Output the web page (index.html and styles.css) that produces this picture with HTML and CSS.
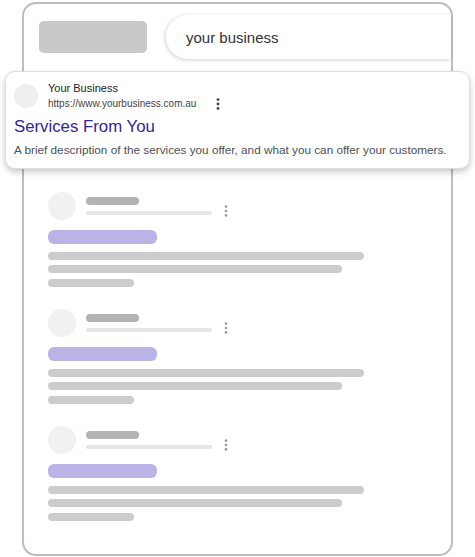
FILE: index.html
```html
<!DOCTYPE html>
<html lang="en">
<head>
<meta charset="utf-8">
<title>Search result preview</title>
<link rel="stylesheet" href="styles.css">
</head>
<body>
<div class="frame">
  <div class="header">
    <div class="logo-block"></div>
    <div class="search">your business</div>
  </div>

  <div class="card">
    <div class="card-head">
      <div class="favicon"></div>
      <div class="meta">
        <div class="name">Your Business</div>
        <div class="url-row">
          <span class="url">https://www.yourbusiness.com.au</span>
          <svg class="kebab" width="4" height="12" viewBox="0 0 4 12"><circle cx="2" cy="1.6" r="1.4"/><circle cx="2" cy="6" r="1.4"/><circle cx="2" cy="10.4" r="1.4"/></svg>
        </div>
      </div>
    </div>
    <div class="title">Services From You</div>
    <div class="desc">A brief description of the services you offer, and what you can offer your customers.</div>
  </div>

  <div class="results">
    <div class="sk">
      <div class="sk-head">
        <div class="sk-circle"></div>
        <div class="sk-meta">
          <div class="sk-name"></div>
          <div class="sk-url"></div>
        </div>
        <svg class="sk-kebab" width="4" height="12" viewBox="0 0 4 12"><circle cx="2" cy="1.6" r="1.3"/><circle cx="2" cy="6" r="1.3"/><circle cx="2" cy="10.4" r="1.3"/></svg>
      </div>
      <div class="sk-title"></div>
      <div class="sk-line l1"></div>
      <div class="sk-line l2"></div>
      <div class="sk-line l3"></div>
    </div>
    <div class="sk">
      <div class="sk-head">
        <div class="sk-circle"></div>
        <div class="sk-meta">
          <div class="sk-name"></div>
          <div class="sk-url"></div>
        </div>
        <svg class="sk-kebab" width="4" height="12" viewBox="0 0 4 12"><circle cx="2" cy="1.6" r="1.3"/><circle cx="2" cy="6" r="1.3"/><circle cx="2" cy="10.4" r="1.3"/></svg>
      </div>
      <div class="sk-title"></div>
      <div class="sk-line l1"></div>
      <div class="sk-line l2"></div>
      <div class="sk-line l3"></div>
    </div>
    <div class="sk">
      <div class="sk-head">
        <div class="sk-circle"></div>
        <div class="sk-meta">
          <div class="sk-name"></div>
          <div class="sk-url"></div>
        </div>
        <svg class="sk-kebab" width="4" height="12" viewBox="0 0 4 12"><circle cx="2" cy="1.6" r="1.3"/><circle cx="2" cy="6" r="1.3"/><circle cx="2" cy="10.4" r="1.3"/></svg>
      </div>
      <div class="sk-title"></div>
      <div class="sk-line l1"></div>
      <div class="sk-line l2"></div>
      <div class="sk-line l3"></div>
    </div>
  </div>
</div>
</body>
</html>
```

FILE: styles.css
```css
html, body {
  margin: 0;
  padding: 0;
  background: #ffffff;
}

body {
  font-family: "Liberation Sans", Arial, sans-serif;
  color: #222;
}

.frame {
  box-sizing: border-box;
  margin: 2px 0 0 22px;
  width: 431px;
  height: 554px;
  border: 2px solid #bdbdbd;
  border-radius: 14px;
  background: #fff;
}

.header {
  display: flex;
  align-items: center;
  padding: 11px 0 0 15px;
}

.logo-block {
  width: 108px;
  height: 32px;
  border-radius: 5px;
  background: #c9c9c9;
  flex: none;
}

.search {
  flex: 1;
  margin-left: 19px;
  height: 44px;
  box-sizing: border-box;
  padding-left: 20px;
  display: flex;
  align-items: center;
  border-radius: 22px 0 0 22px;
  background: #fff;
  box-shadow: -1px 1px 4px rgba(0, 0, 0, 0.18);
  font-size: 15px;
  color: #333;
}

.card {
  margin: 12px -19px 0 -19px;
  border: 1px solid #dedede;
  border-radius: 10px;
  background: #fff;
  box-shadow: 0 3px 6px rgba(0, 0, 0, 0.22);
  padding: 9px 8px 9px 8px;
}

.card-head {
  display: flex;
  align-items: center;
}

.favicon {
  width: 24px;
  height: 24px;
  border-radius: 50%;
  background: #efefef;
  flex: none;
}

.meta {
  margin-left: 10px;
}

.name {
  font-size: 11px;
  line-height: 15px;
  color: #222;
}

.url-row {
  display: flex;
  align-items: center;
  height: 15px;
}

.url {
  font-size: 10px;
  line-height: 15px;
  color: #444;
}

.kebab {
  margin-left: 20px;
  fill: #444;
}

.title {
  margin-top: 5px;
  font-size: 16.8px;
  line-height: 22px;
  color: #33259c;
}

.desc {
  margin-top: 3px;
  font-size: 11.75px;
  line-height: 18px;
  color: #4d4f52;
}

.results {
  padding: 23px 0 0 24px;
}

.sk {
  margin-bottom: 22px;
}

.sk-head {
  display: flex;
  align-items: center;
}

.sk-circle {
  width: 28px;
  height: 28px;
  border-radius: 50%;
  background: #f1f1f1;
  flex: none;
}

.sk-meta {
  margin-left: 10px;
  display: flex;
  flex-direction: column;
  gap: 6px;
}

.sk-name {
  width: 53px;
  height: 8px;
  border-radius: 4px;
  background: #b3b3b3;
}

.sk-url {
  width: 126px;
  height: 4px;
  border-radius: 2px;
  background: #e6e6e6;
}

.sk-kebab {
  margin: 9px 0 0 12px;
  fill: #9a9a9a;
}

.sk-title {
  margin-top: 10px;
  width: 109px;
  height: 14px;
  border-radius: 6px;
  background: #b9b3e6;
}

.sk-line {
  height: 8px;
  border-radius: 4px;
  background: #cccccc;
}

.l1 {
  margin-top: 8px;
  width: 316px;
}

.l2 {
  margin-top: 5px;
  width: 294px;
}

.l3 {
  margin-top: 6px;
  width: 86px;
}
```
